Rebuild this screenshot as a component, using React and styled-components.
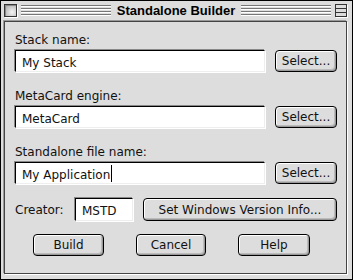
import React from 'react';
import styled, { createGlobalStyle } from 'styled-components';

const Global = createGlobalStyle`
  html, body { margin: 0; padding: 0; background: #ffffff; }
  body { font-family: "DejaVu Sans", "Liberation Sans", sans-serif; }
  * { box-sizing: border-box; }
`;

const Window = styled.div`
  width: 353px;
  height: 280px;
  border: 1px solid #000;
  background: #dddddd;
  display: flex;
  flex-direction: column;
  padding: 0 5px 5px 3px;
`;

const TitleBar = styled.div`
  height: 19px;
  display: flex;
  align-items: center;
  gap: 4px;
`;

const CloseBox = styled.div`
  width: 13px;
  height: 13px;
  border: 1px solid #333;
  background: radial-gradient(circle at 65% 65%, #f4f4f4 0%, #bbbbbb 70%, #999 100%);
  box-shadow: inset 1px 1px 0 #888, 1px 1px 0 #fff;
  flex: none;
`;

const ZoomBox = styled.div`
  width: 12px;
  height: 13px;
  border: 1px solid #333;
  background: #dddddd;
  display: flex;
  flex-direction: column;
  justify-content: space-evenly;
  flex: none;
  box-shadow: 1px 1px 0 #fff;
`;

const ZoomLine = styled.div`
  height: 1px;
  background: #333;
`;

const Stripes = styled.div`
  flex: 1;
  height: 12px;
  background: repeating-linear-gradient(to bottom, #777 0 1px, #ffffff 1px 2px, #dddddd 2px 3px);
`;

const Title = styled.div`
  font-family: "Liberation Sans", Arial, sans-serif;
  font-weight: bold;
  font-size: 13px;
  color: #000;
  padding: 0 2px;
  white-space: nowrap;
`;

const Content = styled.div`
  flex: 1;
  border: 1px solid #444;
  box-shadow: -1px -1px 0 #999, 1px 1px 0 #fff;
  margin-top: 1px;
  padding: 11px 8px 0 10px;
  display: flex;
  flex-direction: column;
`;

const Group = styled.div`
  display: flex;
  flex-direction: column;
  gap: 3px;
  margin-bottom: ${p => p.$mb ?? 17}px;
`;

const Label = styled.div`
  font-size: 12px;
  line-height: 14px;
  color: #111;
  white-space: nowrap;
  width: ${p => (p.$w ? `${p.$w}px` : 'auto')};
`;

const Row = styled.div`
  display: flex;
  align-items: center;
  gap: ${p => p.$gap ?? 10}px;
`;

const Field = styled.div`
  width: ${p => p.$w}px;
  height: ${p => p.$h ?? 22}px;
  background: #fff;
  border-top: 1px solid #000;
  border-left: 1px solid #000;
  border-right: 1px solid #eee;
  border-bottom: 1px solid #eee;
  box-shadow: -1px -1px 0 #888, 1px 1px 0 #fff;
  font-size: 12px;
  line-height: 14px;
  color: #111;
  padding: 3px 0 0 6px;
  white-space: nowrap;
  display: flex;
  align-items: center;
  margin-right: ${p => p.$mr ?? 0}px;
`;

const Caret = styled.span`
  display: inline-block;
  width: 1px;
  height: 17px;
  background: #000;
  margin-left: 1px;
  margin-top: -2px;
`;

const Button = styled.div`
  width: ${p => p.$w}px;
  height: ${p => p.$h ?? 22}px;
  border: 1px solid #000;
  border-radius: 4px;
  background: #dddddd;
  box-shadow: inset 1px 1px 0 #fff, inset -1px -1px 0 #999, inset -2px -2px 0 #bbb;
  font-size: 12px;
  display: flex;
  align-items: center;
  justify-content: center;
  white-space: nowrap;
  color: #111;
  flex: none;
`;

const ButtonRow = styled.div`
  display: flex;
  padding-left: 18px;
  margin-top: 13px;
  gap: 32px;
`;

export default function App() {
  return (
    <>
      <Global />
      <Window>
        <TitleBar>
          <CloseBox />
          <Stripes />
          <Title>Standalone Builder</Title>
          <Stripes />
          <ZoomBox>
            <ZoomLine />
            <ZoomLine />
          </ZoomBox>
        </TitleBar>
        <Content>
          <Group>
            <Label>Stack name:</Label>
            <Row>
              <Field $w={250}>My Stack</Field>
              <Button $w={62}>Select...</Button>
            </Row>
          </Group>
          <Group>
            <Label>MetaCard engine:</Label>
            <Row>
              <Field $w={250}>MetaCard</Field>
              <Button $w={62}>Select...</Button>
            </Row>
          </Group>
          <Group $mb={14}>
            <Label>Standalone file name:</Label>
            <Row>
              <Field $w={250}>My Application<Caret /></Field>
              <Button $w={62}>Select...</Button>
            </Row>
          </Group>
          <Row $gap={0}>
            <Label $w={60}>Creator:</Label>
            <Field $w={58} $h={23} $mr={10}>MSTD</Field>
            <Button $w={194} $h={23}>Set Windows Version Info...</Button>
          </Row>
          <ButtonRow>
            <Button $w={71}>Build</Button>
            <Button $w={70}>Cancel</Button>
            <Button $w={72}>Help</Button>
          </ButtonRow>
        </Content>
      </Window>
    </>
  );
}
